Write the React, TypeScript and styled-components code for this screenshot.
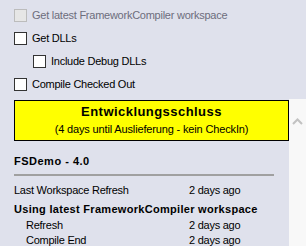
import React from "react";
import styled, { createGlobalStyle } from "styled-components";

const Global = createGlobalStyle`
  html, body { margin: 0; padding: 0; }
  body { background: #dfe1ec; font-family: "Liberation Sans", Arial, sans-serif; font-size: 11px; color: #000; }
`;

const Page = styled.div`
  width: 306px;
  height: 246px;
  overflow: hidden;
  background: #dfe1ec;
  display: flex;
  flex-direction: column;
  letter-spacing: -0.25px;
`;

const Options = styled.div`
  padding: 4px 0 0 14px;
  height: 99px;
  box-sizing: border-box;
  flex: none;
`;

const OptionRow = styled.label<{ $indent?: boolean; $disabled?: boolean }>`
  display: flex;
  align-items: center;
  height: 23px;
  padding-left: ${(p) => (p.$indent ? 19 : 0)}px;
  gap: 5px;
  color: ${(p) => (p.$disabled ? "#6d6d7c" : "#000")};
  line-height: 13px;
`;

const Box = styled.span<{ $disabled?: boolean }>`
  width: 13px;
  height: 13px;
  box-sizing: border-box;
  border: 1px solid ${(p) => (p.$disabled ? "#bcbcbc" : "#333")};
  background: ${(p) => (p.$disabled ? "#e6e6e6" : "#fff")};
  flex: none;
`;

const ScrollArea = styled.div`
  flex: 1;
  display: flex;
  min-height: 0;
`;

const Content = styled.div`
  flex: 1;
  padding: 1px 0 0 14px;
  min-width: 0;
`;

const Scrollbar = styled.div`
  width: 17px;
  background: #f8f8f8;
  display: flex;
  justify-content: center;
  align-items: flex-start;
  padding-top: 19px;
  box-sizing: border-box;
`;

const Banner = styled.div`
  height: 41px;
  box-sizing: border-box;
  border: 1px solid #000;
  background: #ffff00;
  display: flex;
  flex-direction: column;
  align-items: center;
  padding-top: 3px;
`;

const BannerTitle = styled.div`
  font-size: 13px;
  font-weight: bold;
  line-height: 16px;
  letter-spacing: 0.45px;
`;

const BannerSub = styled.div`
  font-size: 11px;
  line-height: 13px;
  margin-top: 3px;
  letter-spacing: -0.15px;
`;

const Heading = styled.div`
  font-weight: bold;
  line-height: 14px;
  margin-top: 13px;
  letter-spacing: 0.5px;
`;

const Rule = styled.div`
  height: 2px;
  width: 260px;
  background: #a0a0a0;
  margin-top: 6px;
`;

const InfoRow = styled.div<{ $indent?: boolean; $gap?: number }>`
  display: grid;
  grid-template-columns: 175px auto;
  line-height: 15px;
  margin-top: ${(p) => p.$gap ?? 0}px;
  & > span:first-child { padding-left: ${(p) => (p.$indent ? 12 : 0)}px; }
`;

const SubHeading = styled.div`
  font-weight: bold;
  line-height: 15px;
  margin-top: 4px;
  letter-spacing: 0.3px;
`;

const Chevron = () => (
  <svg width="11" height="7" viewBox="0 0 11 7">
    <path d="M1 6 L5.5 1.5 L10 6" fill="none" stroke="#c2c2c2" strokeWidth="2" />
  </svg>
);

export default function App() {
  return (
    <Page>
      <Global />
      <Options>
        <OptionRow $disabled>
          <Box $disabled />
          <span>Get latest FrameworkCompiler workspace</span>
        </OptionRow>
        <OptionRow>
          <Box />
          <span>Get DLLs</span>
        </OptionRow>
        <OptionRow $indent>
          <Box />
          <span>Include Debug DLLs</span>
        </OptionRow>
        <OptionRow>
          <Box />
          <span>Compile Checked Out</span>
        </OptionRow>
      </Options>
      <ScrollArea>
        <Content>
          <Banner>
            <BannerTitle>Entwicklungsschluss</BannerTitle>
            <BannerSub>(4 days until Auslieferung - kein CheckIn)</BannerSub>
          </Banner>
          <Heading>FSDemo - 4.0</Heading>
          <Rule />
          <InfoRow $gap={7}>
            <span>Last Workspace Refresh</span>
            <span>2 days ago</span>
          </InfoRow>
          <SubHeading>Using latest FrameworkCompiler workspace</SubHeading>
          <InfoRow $indent $gap={1}>
            <span>Refresh</span>
            <span>2 days ago</span>
          </InfoRow>
          <InfoRow $indent>
            <span>Compile End</span>
            <span>2 days ago</span>
          </InfoRow>
        </Content>
        <Scrollbar>
          <Chevron />
        </Scrollbar>
      </ScrollArea>
    </Page>
  );
}
